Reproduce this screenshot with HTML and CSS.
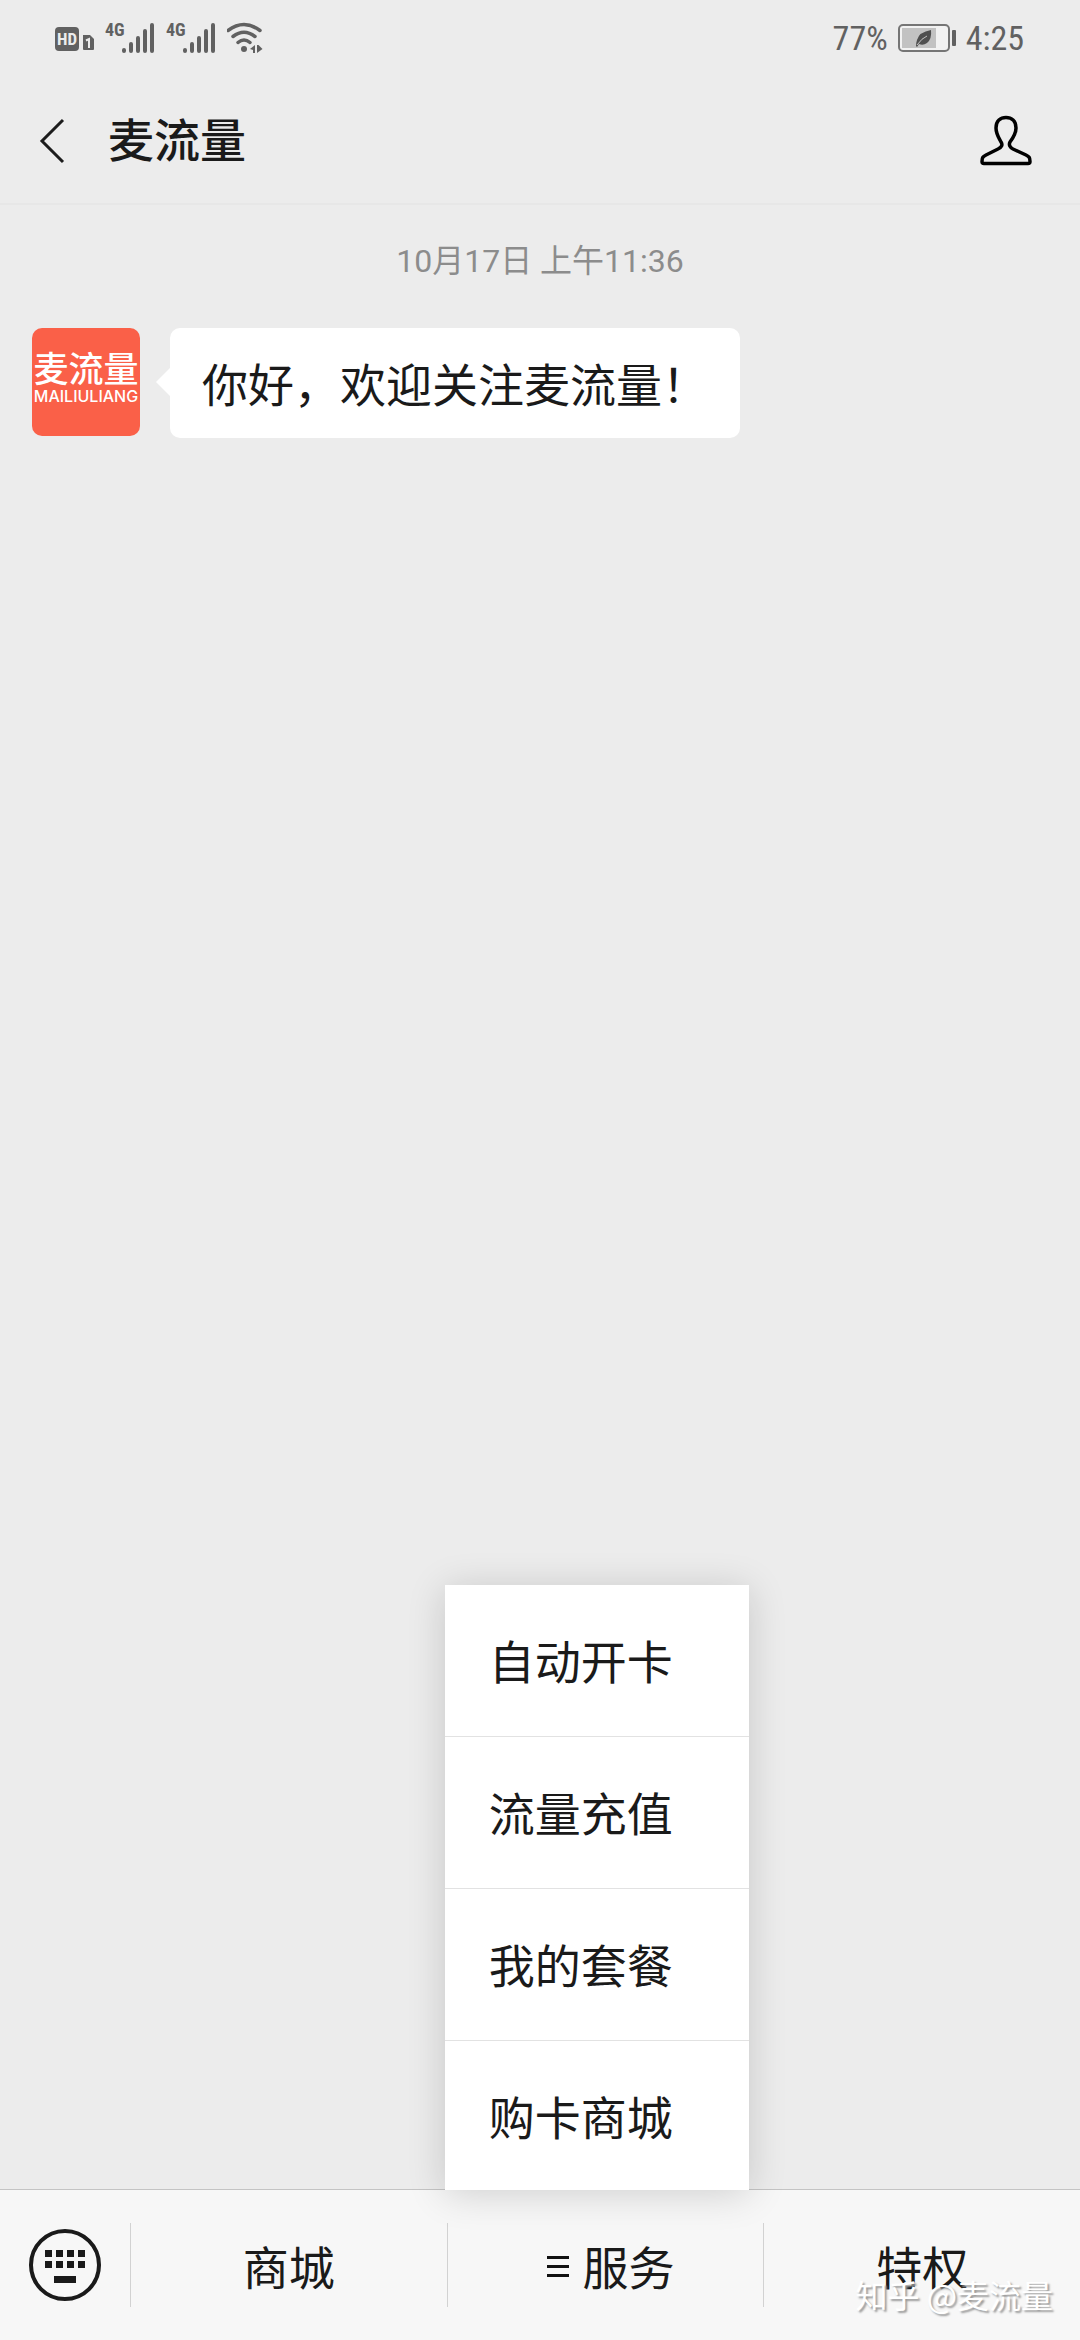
FILE: index.html
```html
<!DOCTYPE html>
<html lang="zh-CN">
<head>
  <meta charset="UTF-8">
  <meta name="viewport" content="width=device-width">
  <title>麦流量</title>
  <link rel="stylesheet" href="styles.css">
</head>
<body>

<div class="status-bar">
  <div class="status-left">
    <svg width="40" height="40" viewBox="0 -4 40 40">
      <rect x="0" y="5" width="24" height="24" rx="4" fill="#616161"/>
      <text x="12" y="23" text-anchor="middle" class="hd-text">HD</text>
      <path d="M28 13h7l4 4v10q0 1-1 1H29q-1 0-1-1z" fill="#616161"/>
      <path d="M31 18.500l3-1.500v9" fill="none" stroke="#ececec" stroke-width="2"/>
    </svg>
    <svg width="51" height="40" viewBox="0 -4 51 40">
      <text x="0" y="14" class="net-text">4G</text>
      <path d="M19 28v1M26 22v7M33 16v13M40 9v20M47 3v26" stroke="#616161" stroke-width="4" stroke-linecap="round"/>
    </svg>
    <svg width="51" height="40" viewBox="0 -4 51 40">
      <text x="0" y="14" class="net-text">4G</text>
      <path d="M19 28v1M26 22v7M33 16v13M40 9v20M47 3v26" stroke="#616161" stroke-width="4" stroke-linecap="round"/>
    </svg>
    <svg width="38" height="40" viewBox="1 -4 38 40">
      <path d="M2 8.500q16-12 32 0M7 14.500q11-8.500 22 0M12 20.500q6-5 12 0" fill="none" stroke="#616161" stroke-width="3.500" stroke-linecap="round"/>
      <circle cx="18" cy="27" r="3" fill="#616161"/>
      <path d="M29 23v8h-2v-3l-3-1zM31 31v-8h1.500l4 4z" fill="#616161"/>
    </svg>
  </div>
  <div class="status-right">
    <span>77%</span>
    <svg width="58" height="28" viewBox="0 0 58 28">
      <rect x="1" y="1" width="50" height="26" rx="4" fill="#f2f2f2" stroke="#757575" stroke-width="2"/>
      <rect x="4" y="4" width="34" height="20" fill="#c2c2c2"/>
      <path d="M18 22q0-3 1-6 2-8 14-10 1 9-4 13-4 3-8 1l-2 3z" fill="#4f4f4f"/>
      <path d="M19 21q5-7 10-9" fill="none" stroke="#c2c2c2" stroke-width="1"/>
      <rect x="54" y="6" width="4" height="16" rx="1" fill="#616161"/>
    </svg>
    <span>4:25</span>
  </div>
</div>

<header class="header">
  <button class="icon-btn" aria-label="返回">
    <svg width="28" height="48" viewBox="0 0 28 48">
      <path d="M25 3L4 24l21 21" fill="none" stroke="#1c1c1c" stroke-width="3"/>
    </svg>
  </button>
  <h1 class="title">麦流量</h1>
  <button class="icon-btn profile" aria-label="公众号资料">
    <svg width="54" height="52" viewBox="0 0 54 52">
      <path d="M5 48.500h44q2 0 2-2c0-4-1-5-4-6.500L34 34c-3-1.500-4.500-4-3-7 3-4 6-8 6-14C37 6 32.500 2.500 27 2.500S17 6 17 13c0 6 3 10 5 14 2 3 .5 5.500-3 7L7 40c-3 1.500-4 2.500-4 6.500q0 2 2 2z" fill="none" stroke="#000" stroke-width="3.500"/>
    </svg>
  </button>
</header>

<main class="chat">
  <time class="time">10月17日 上午11:36</time>
  <div class="message">
    <div class="avatar">
      <span class="avatar-name">麦流量</span>
      <span class="avatar-sub">MAILIULIANG</span>
    </div>
    <p class="bubble">你好，欢迎关注麦流量！</p>
  </div>
</main>

<footer class="footer">
  <button class="keyboard" aria-label="键盘">
    <svg width="74" height="74" viewBox="0 0 74 74">
      <circle cx="37" cy="37" r="34" fill="none" stroke="#1a1a1a" stroke-width="4"/>
      <path d="M17 22h7v7h-7zM28 22h7v7h-7zM39 22h7v7h-7zM50 22h7v7h-7zM17 33h7v7h-7zM28 33h7v7h-7zM39 33h7v7h-7zM50 33h7v7h-7zM26 48h22v7H26z" fill="#1a1a1a"/>
    </svg>
  </button>
  <div class="tab">
    <button class="tab-btn">商城</button>
  </div>
  <div class="tab">
    <div class="menu">
      <button class="menu-item">自动开卡</button>
      <button class="menu-item">流量充值</button>
      <button class="menu-item">我的套餐</button>
      <button class="menu-item">购卡商城</button>
    </div>
    <button class="tab-btn">
      <svg width="32" height="24" viewBox="0 0 32 24">
        <path d="M10 4.500h22M10 13.500h22M10 22.500h22" stroke="#111" stroke-width="3"/>
      </svg>
      服务
    </button>
  </div>
  <div class="tab">
    <button class="tab-btn">特权</button>
  </div>
  <span class="watermark">知乎 @麦流量</span>
</footer>

</body>
</html>
```
FILE: styles.css
```css
* {
  box-sizing: border-box;
}
body {
  margin: 0;
  min-height: 100vh;
  display: flex;
  flex-direction: column;
  background: #ececec;
  color: #1a1a1a;
  font-family: Roboto, "Noto Sans CJK SC", sans-serif;
}
button {
  padding: 0;
  border: none;
  background: none;
  color: inherit;
  font: inherit;
  cursor: pointer;
}
svg {
  display: block;
  flex: none;
}

/* status bar */
.status-bar {
  display: flex;
  justify-content: space-between;
  align-items: center;
  height: 76px;
  padding: 0 56px 0 55px;
  color: #616161;
}
.status-left {
  display: flex;
  gap: 10px;
}
.status-right {
  display: flex;
  align-items: center;
  gap: 10px;
  font-family: "Roboto Condensed", Roboto, sans-serif;
  font-size: 34px;
}
.hd-text {
  fill: #ececec;
  font-family: "Roboto Condensed", Roboto, sans-serif;
  font-size: 17px;
  font-weight: 700;
}
.net-text {
  fill: #616161;
  font-family: "Roboto Condensed", Roboto, sans-serif;
  font-size: 18px;
  font-weight: 700;
}

/* header */
.header {
  display: flex;
  align-items: center;
  height: 129px;
  padding: 2px 47px 0 38px;
  border-bottom: 2px solid #e7e7e7;
}
.title {
  margin: 0 0 0 42px;
  font-size: 46px;
  font-weight: 500;
  line-height: 64px;
}
.profile {
  margin-left: auto;
}

/* messages */
.chat {
  flex: 1;
  padding: 32px;
}
.time {
  display: block;
  color: #8c8c8c;
  font-size: 32px;
  line-height: 48px;
  text-align: center;
}
.message {
  display: flex;
  align-items: flex-start;
  gap: 30px;
  margin-top: 43px;
}
.avatar {
  display: flex;
  flex-direction: column;
  align-items: center;
  flex: none;
  width: 108px;
  height: 108px;
  padding-top: 24px;
  border-radius: 10px;
  background: #fa6048;
  color: #fff;
}
.avatar-name {
  font-size: 35px;
  font-weight: 500;
  line-height: 38px;
}
.avatar-sub {
  font-family: Inter, sans-serif;
  font-size: 16px;
  font-weight: 500;
  line-height: 12px;
}
.bubble {
  position: relative;
  margin: 0;
  padding: 26px 32px 20px;
  border-radius: 10px;
  background: #fff;
  font-size: 46px;
  line-height: 64px;
}
.bubble::before {
  content: "";
  position: absolute;
  top: 40px;
  left: -14px;
  border: 14px solid transparent;
  border-left-width: 0;
  border-right-color: #fff;
}

/* bottom menu */
.footer {
  position: relative;
  display: flex;
  align-items: center;
  height: 151px;
  border-top: 1px solid #c4c4c4;
  background: #f7f7f7;
}
.keyboard {
  display: flex;
  justify-content: center;
  width: 130px;
}
.tab {
  position: relative;
  display: flex;
  flex: 1;
  align-items: center;
  height: 100%;
}
.tab-btn {
  display: flex;
  flex: 1;
  justify-content: center;
  align-items: center;
  gap: 14px;
  height: 84px;
  border-left: 1px solid #d2d2d2;
  font-size: 46px;
}
.menu {
  position: absolute;
  bottom: 100%;
  left: -2px;
  width: 304px;
  background: #fff;
  box-shadow: 0 4px 36px rgba(0, 0, 0, 0.16);
}
.menu-item {
  display: block;
  width: 100%;
  padding: 46px 44px 41px;
  border-bottom: 1px solid #e2e2e2;
  font-size: 46px;
  line-height: 64px;
  text-align: left;
}
.menu-item:last-child {
  padding-bottom: 39px;
  border-bottom: none;
}
.watermark {
  position: absolute;
  right: 27px;
  bottom: 24px;
  color: #fff;
  font-family: "Noto Sans CJK SC", sans-serif;
  font-size: 32px;
  line-height: 44px;
  text-shadow: 2px 2px 2px #999;
}
```
